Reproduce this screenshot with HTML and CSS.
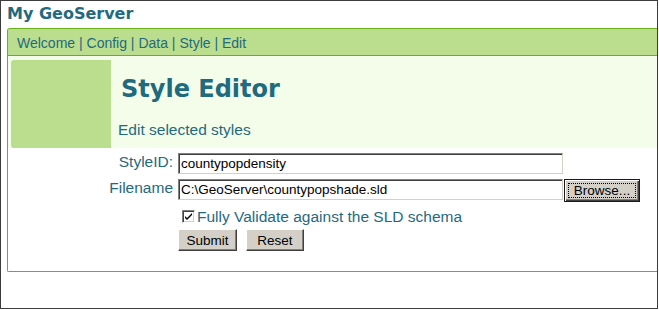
FILE: index.html
```html
<!DOCTYPE html>
<html lang="en">
<head>
    <meta charset="UTF-8">
    <title>My GeoServer - Style Editor</title>
    <link rel="stylesheet" href="styles.css">
</head>
<body>
<div class="frame">
    <div class="site-title">My GeoServer</div>

    <div class="panel">
        <div class="nav">
            <a href="#">Welcome</a> | <a href="#">Config</a> | <a href="#">Data</a> | <a href="#">Style</a> | <a href="#">Edit</a>
        </div>

        <div class="page-header">
            <div class="header-block"></div>
            <div class="header-text">
                <h1>Style Editor</h1>
                <p>Edit selected styles</p>
            </div>
        </div>

        <form class="style-form">
            <label class="field-label" for="styleid">StyleID:</label>
            <div class="field">
                <input type="text" id="styleid" value="countypopdensity">
            </div>

            <label class="field-label" for="filename">Filename</label>
            <div class="field">
                <input type="text" id="filename" value="C:\GeoServer\countypopshade.sld">
                <button type="button" class="browse"><span>Browse...</span></button>
            </div>

            <div></div>
            <label class="check">
                <span class="box">
                    <svg width="9" height="9" viewBox="0 0 9 9"><path d="M1 4 L3 6 L8 1 L8 3 L3 8 L1 6 Z" fill="#000"/></svg>
                </span>
                Fully Validate against the SLD schema
            </label>

            <div></div>
            <div class="actions">
                <button type="submit" class="btn btn-submit">Submit</button>
                <button type="reset" class="btn btn-reset">Reset</button>
            </div>
        </form>
    </div>
</div>
</body>
</html>
```

FILE: styles.css
```css
body {
    margin: 0;
    background: #fff;
    font-family: "Liberation Sans", Arial, sans-serif;
    color: #1f6a7f;
}

.frame {
    box-sizing: border-box;
    width: 658px;
    height: 309px;
    border: 1px solid #3c3c3c;
    padding-left: 6px;
    overflow: hidden;
}

.site-title {
    font-family: "DejaVu Sans", Verdana, sans-serif;
    font-weight: bold;
    font-size: 16px;
    line-height: 20px;
    height: 20px;
    padding-top: 3px;
    margin-bottom: 4px;
}

.panel {
    box-sizing: border-box;
    width: 650px;
    border: 1px solid #6ab01a;
    border-right: none;
    border-radius: 3px 0 0 2px;
}

.nav {
    height: 24px;
    padding: 2px 0 0 9px;
    line-height: 24px;
    font-size: 14px;
    background: #bbdd8e;
    border-bottom: 1px solid #6ab01a;
    border-radius: 2px 0 0 0;
}

.nav a {
    color: #1f6a7f;
    text-decoration: none;
}

.page-header {
    display: flex;
    padding: 4px 0 0 3px;
    background: #f4fdea;
}

.header-block {
    width: 100px;
    height: 88px;
    background: #bbdd8e;
    border-radius: 3px 0 0 3px;
}

.header-text {
    padding: 15px 0 0 7px;
}

.header-text h1 {
    margin: 0 0 0 3px;
    font-family: "DejaVu Sans", Verdana, sans-serif;
    font-size: 24px;
    line-height: 28px;
}

.header-text p {
    margin: 18px 0 0 0;
    font-size: 15.5px;
    line-height: 18px;
}

.style-form {
    display: grid;
    grid-template-columns: 165px 1fr;
    grid-template-rows: 21px 23px 17px 22px;
    column-gap: 5px;
    row-gap: 5px;
    padding: 5px 0 20px 0;
    margin: 0;
}

.style-form > div:nth-child(5) {
}

.field-label {
    text-align: right;
    font-size: 15.5px;
    line-height: 18px;
}

.field {
    display: flex;
    align-items: flex-start;
}

.field input {
    box-sizing: border-box;
    width: 385px;
    height: 21px;
    margin: 0;
    padding: 0 2px;
    border: 1px solid;
    border-color: #808080 #d4d0c8 #d4d0c8 #808080;
    box-shadow: inset 1px 1px #404040;
    font-family: "Liberation Sans", Arial, sans-serif;
    font-size: 13.5px;
    color: #000;
    outline: none;
}

.browse {
    box-sizing: border-box;
    width: 76px;
    height: 23px;
    margin: 0 0 0 1px;
    padding: 3px;
    background: #d4d0c8;
    border: 1px solid #1a1a1a;
    box-shadow: inset 1px 1px #fff, inset -1px -1px #404040, inset -2px -2px #808080;
    font-family: "Liberation Sans", Arial, sans-serif;
    font-size: 13.5px;
    color: #000;
}

.browse span {
    display: block;
    height: 13px;
    line-height: 13px;
    border: 1px dotted #000;
}

.check {
    display: flex;
    align-items: center;
    padding-top: 1px;
    font-size: 15.5px;
    line-height: 17px;
}

.box {
    box-sizing: border-box;
    display: flex;
    align-items: center;
    justify-content: center;
    width: 13px;
    height: 13px;
    margin: 0 2px 0 4px;
    background: #fff;
    border: 1px solid;
    border-color: #808080 #fff #fff #808080;
    box-shadow: inset 1px 1px #404040, inset -1px -1px #d4d0c8;
}

.actions {
    display: flex;
    gap: 9px;
}

.btn {
    box-sizing: border-box;
    height: 22px;
    margin: 0;
    padding: 0;
    background: #d4d0c8;
    border: 1px solid;
    border-color: #fff #404040 #404040 #fff;
    box-shadow: inset -1px -1px #808080;
    font-family: "Liberation Sans", Arial, sans-serif;
    font-size: 13.5px;
    color: #000;
}

.btn-submit {
    width: 59px;
}

.btn-reset {
    width: 58px;
}
```
